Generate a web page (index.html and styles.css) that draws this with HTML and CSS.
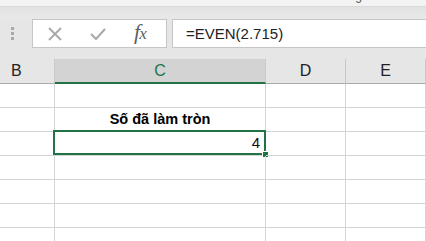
FILE: index.html
```html
<!DOCTYPE html>
<html>
<head>
<meta charset="utf-8">
<link rel="stylesheet" href="styles.css">
</head>
<body>
<div class="ribbon">
  <span class="group-label font-label">Font</span>
  <span class="group-label align-label">Alignment</span>
</div>
<div class="bar">
  <div class="formula-row">
    <div class="grip"><i></i><i></i><i></i></div>
    <div class="func-box">
      <svg class="ico-x" width="14" height="14" viewBox="0 0 14 14"><path d="M1 1L13 13M13 1L1 13" stroke="#a8a8a8" stroke-width="1.8" fill="none"/></svg>
      <svg class="ico-check" width="16" height="12" viewBox="0 0 16 12"><path d="M1 6L6 11L15 1" stroke="#a8a8a8" stroke-width="2" fill="none"/></svg>
      <span class="fx">f<span class="fx-x">x</span></span>
    </div>
    <div class="formula-input">=EVEN(2.715)</div>
  </div>
</div>
<div class="sheet">
  <div class="hdr hdr-b">B</div>
  <div class="hdr hdr-sel">C</div>
  <div class="hdr">D</div>
  <div class="hdr">E</div>

  <div class="cell"></div><div class="cell"></div><div class="cell"></div><div class="cell"></div>
  <div class="cell"></div><div class="cell cell-title">Số đã làm tròn</div><div class="cell"></div><div class="cell"></div>
  <div class="cell"></div><div class="cell cell-num">4<span class="sel-box"><span class="fill-handle"></span></span></div><div class="cell"></div><div class="cell"></div>
  <div class="cell"></div><div class="cell"></div><div class="cell"></div><div class="cell"></div>
  <div class="cell"></div><div class="cell"></div><div class="cell"></div><div class="cell"></div>
  <div class="cell"></div><div class="cell"></div><div class="cell"></div><div class="cell"></div>
  <div class="cell"></div><div class="cell"></div><div class="cell"></div><div class="cell"></div>
</div>
</body>
</html>
```
FILE: styles.css
```css
html, body {
  margin: 0;
  padding: 0;
}
body {
  width: 426px;
  height: 241px;
  overflow: hidden;
  background: #ffffff;
  font-family: "Liberation Sans", Arial, sans-serif;
}
.ribbon {
  height: 6px;
  background: #f3f3f3;
  border-bottom: 1px solid #d9d9d9;
  overflow: hidden;
  display: flex;
}
.group-label {
  font-size: 12px;
  line-height: 12px;
  color: #555;
  margin-top: -10px;
}
.font-label { margin-left: 100px; }
.align-label { margin-left: 218px; }
.bar {
  background: linear-gradient(#e2e2e2 0px, #e8e8e8 11px, #e6e6e6 12px);
  padding: 12px 0 11px 0;
}
.formula-row {
  display: flex;
  height: 29px;
}
.grip {
  width: 32px;
  display: flex;
  flex-direction: column;
  align-items: flex-start;
  padding: 8px 0 0 11px;
  box-sizing: border-box;
  gap: 2px;
}
.grip i {
  display: block;
  width: 3px;
  height: 3px;
  background: #a9a9a9;
}
.func-box {
  width: 135px;
  box-sizing: border-box;
  background: #fff;
  border: 1px solid #c6c6c6;
  display: flex;
  align-items: center;
  position: relative;
}
.ico-x { margin-left: 15px; }
.ico-check { margin-left: 28px; margin-top: 1px; }
.fx {
  margin-left: 28px;
  font-family: "Liberation Serif", "Times New Roman", serif;
  font-style: italic;
  font-size: 22px;
  color: #5f5f5f;
  line-height: 1;
  margin-top: -3px;
  letter-spacing: -1px;
}
.fx-x { font-size: 17px; }
.formula-input {
  flex: 1;
  margin-left: 5px;
  background: #fff;
  border: 1px solid #c6c6c6;
  border-right: none;
  font-size: 15px;
  color: #222;
  line-height: 27px;
  padding-left: 13px;
}
.sheet {
  display: grid;
  grid-template-columns: 55px 211px 80px 80px;
  grid-template-rows: 25px repeat(7, 24px);
}
.hdr {
  background: #e6e6e6;
  border-right: 1px solid #c8c8c8;
  border-bottom: 1px solid #ababab;
  display: flex;
  align-items: center;
  justify-content: center;
  font-size: 16px;
  color: #222;
  padding-bottom: 1px;
}
.hdr-b {
  justify-content: flex-start;
  padding-left: 11px;
}
.hdr-sel {
  background: #d3d3d3;
  color: #217346;
  border-bottom: 2px solid #217346;
  padding-bottom: 0;
}
.cell {
  border-right: 1px solid #d4d4d4;
  border-bottom: 1px solid #d4d4d4;
  position: relative;
  font-size: 14px;
  color: #000;
}
.cell-title {
  font-weight: bold;
  font-size: 14.5px;
  display: flex;
  justify-content: center;
  align-items: flex-end;
  padding-bottom: 4px;
  line-height: 16px;
}
.cell-num {
  display: flex;
  justify-content: flex-end;
  align-items: flex-end;
  padding-right: 5px;
  padding-bottom: 4px;
  line-height: 16px;
  font-size: 15px;
  color: #111;
}
.sel-box {
  position: absolute;
  left: -2px;
  top: -2px;
  right: -1px;
  bottom: 0;
  border: 2px solid #217346;
}
.fill-handle {
  position: absolute;
  right: -4px;
  bottom: -4px;
  width: 5px;
  height: 5px;
  background: #217346;
  border: 1px solid #fff;
  border-right: none;
  border-bottom: none;
}
```
